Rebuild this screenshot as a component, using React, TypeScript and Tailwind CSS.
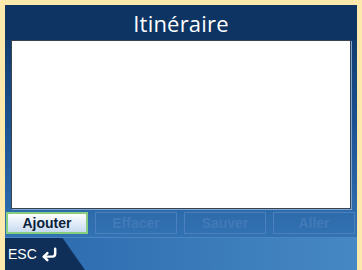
import { CornerDownLeft } from "lucide-react";

const buttons = [
  { label: "Ajouter", active: true },
  { label: "Effacer", active: false },
  { label: "Sauver", active: false },
  { label: "Aller", active: false },
];

export default function App() {
  return (
    <div className="w-[362px] h-[270px] bg-[#fce9ab] pl-[5px] pr-[5px] pt-[5px] overflow-hidden font-['Liberation_Sans',sans-serif]">
      <div className="h-full flex flex-col bg-gradient-to-b from-[#0d3463] via-[#1d5596] to-[#3a7cbc]">
        <div className="h-[35px] bg-[#0d3463] flex items-center justify-center">
          <span className="text-white text-[22px] leading-none font-['Open_Sans',sans-serif] tracking-[0.2px]">Itinéraire</span>
        </div>
        <div className="px-[6px]">
          <div className="h-[169px] bg-white border border-[#3b4250] shadow-[1px_1px_0_#7aa6d6]" />
        </div>
        <div className="flex gap-[7px] px-[1px] mt-[3px] h-[22px]">
          {buttons.map((b) =>
            b.active ? (
              <div
                key={b.label}
                className="w-[82px] flex items-center justify-center border-2 border-[#86cf7e] bg-gradient-to-b from-white to-[#c6daf0] text-[#0c1f3a] text-[14px] font-bold"
              >
                {b.label}
              </div>
            ) : (
              <div
                key={b.label}
                className="w-[82px] flex items-center justify-center border border-[#4a80bd] text-[#4279b8] text-[14px] font-bold"
              >
                {b.label}
              </div>
            )
          )}
        </div>
        <div className="flex-1 mt-[3px] flex border-t border-[#4a86c4] bg-gradient-to-r from-[#2a68ad] to-[#4688c3]">
          <div className="w-[80px] bg-[#102f58] [clip-path:polygon(0_0,72%_0,100%_100%,0_100%)] flex items-center pl-[3px] gap-[4px]">
            <span className="text-white text-[14px] leading-none">ESC</span>
            <CornerDownLeft size={17} strokeWidth={3.5} className="text-white" />
          </div>
        </div>
      </div>
    </div>
  );
}
